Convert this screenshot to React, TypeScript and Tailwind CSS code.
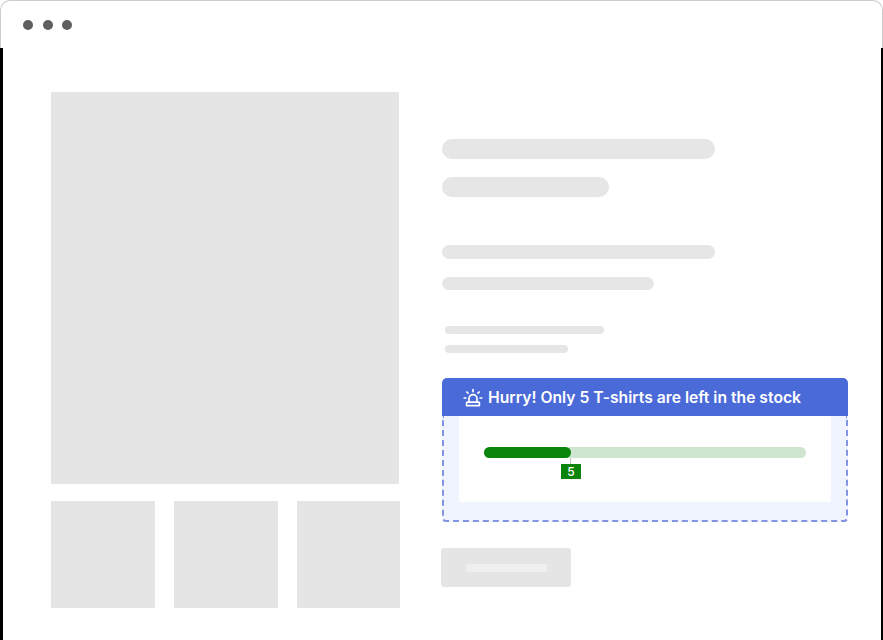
const skeleton = "rounded-full bg-[#e6e6e6]"

function AlarmIcon() {
  return (
    <svg width="20" height="20" viewBox="0 0 20 20" fill="none" stroke="white" strokeWidth="1.7" strokeLinecap="round" strokeLinejoin="round">
      <path d="M6 14V10.6a4 4 0 0 1 8 0V14" />
      <path d="M4.4 14.2h11.2a.8.8 0 0 1 .8.8v2.6H3.6V15a.8.8 0 0 1 .8-.8z" />
      <path d="M10 1.6v2M3.8 4l1.2 1.2M16.2 4 15 5.2M1.2 10h1.6M17.2 10h1.6" />
    </svg>
  )
}

function StockAlert() {
  return (
    <div className="w-[406px]">
      {/* blue head */}
      <div className="h-[38px] bg-[#4a6ad8] rounded-t-[5px] flex flex-row items-center pl-[21px] pt-[2px] gap-[5px]">
        <AlarmIcon />
        <span className="text-white text-[15.7px] font-semibold whitespace-nowrap">Hurry! Only 5 T-shirts are left in the stock</span>
      </div>
      {/* dashed box */}
      <div className="h-[106px] bg-[#eff4ff] border-2 border-t-0 border-dashed border-[#8394e2] rounded-b-[4px] px-[15px] pb-[18px]">
        <div className="h-full bg-white rounded-b-[2px] px-[25px] pt-[31px]">
          <div className="h-[11px] bg-[#cfe5cf] rounded-full">
            <div className="h-full w-[87px] bg-[#0a840a] rounded-full" />
          </div>
          <div className="w-[87px] flex flex-col items-end">
            <div className="w-px h-[6px] bg-[#b5c9b5]" />
          </div>
          <div className="w-[20px] h-[15px] ml-[77px] bg-[#0a840a] text-white text-[12px] leading-[15px] font-medium text-center">5</div>
        </div>
      </div>
    </div>
  )
}

export default function App() {
  return (
    <div className="w-[883px] h-[640px] bg-white overflow-hidden" style={{ fontFamily: "Inter, sans-serif" }}>
      {/* browser bar */}
      <div className="h-[48px] bg-white border-t border-x border-[#cccccc] rounded-t-[10px] flex flex-row items-center gap-[9.5px] pl-[22px]">
        <div className="w-[10px] h-[10px] rounded-full bg-[#5e5e5e]" />
        <div className="w-[10px] h-[10px] rounded-full bg-[#5e5e5e]" />
        <div className="w-[10px] h-[10px] rounded-full bg-[#5e5e5e]" />
      </div>
      <div className="h-[592px] border-l-[3px] border-l-black border-r-2 border-r-black flex flex-row pl-[48px] pt-[44px]">
        {/* left */}
        <div className="w-[349px] mr-[42px]">
          <div className="w-[348px] h-[392px] bg-[#e5e5e5]" />
          <div className="flex flex-row gap-[19px] mt-[17px]">
            <div className="w-[104px] h-[107px] bg-[#e5e5e5]" />
            <div className="w-[104px] h-[107px] bg-[#e5e5e5]" />
            <div className="w-[103px] h-[107px] bg-[#e5e5e5]" />
          </div>
        </div>
        {/* right */}
        <div className="flex flex-col w-[406px] pt-[47px]">
          <div className={`${skeleton} w-[273px] h-[20px]`} />
          <div className={`${skeleton} w-[167px] h-[20px] mt-[18px]`} />
          <div className={`${skeleton} w-[273px] h-[14px] mt-[48px]`} />
          <div className={`${skeleton} w-[212px] h-[13px] mt-[18px]`} />
          <div className={`${skeleton} w-[159px] h-[8px] mt-[36px] ml-[3px]`} />
          <div className={`${skeleton} w-[123px] h-[8px] mt-[11px] ml-[3px]`} />
          <div className="mt-[25px]">
            <StockAlert />
          </div>
          <div className="w-[130px] h-[39px] mt-[26px] bg-[#e5e5e5] rounded-[3px] flex items-center justify-center ml-[-1px]">
            <div className="w-[81px] h-[8px] bg-[#efefef]" />
          </div>
        </div>
      </div>
    </div>
  )
}
